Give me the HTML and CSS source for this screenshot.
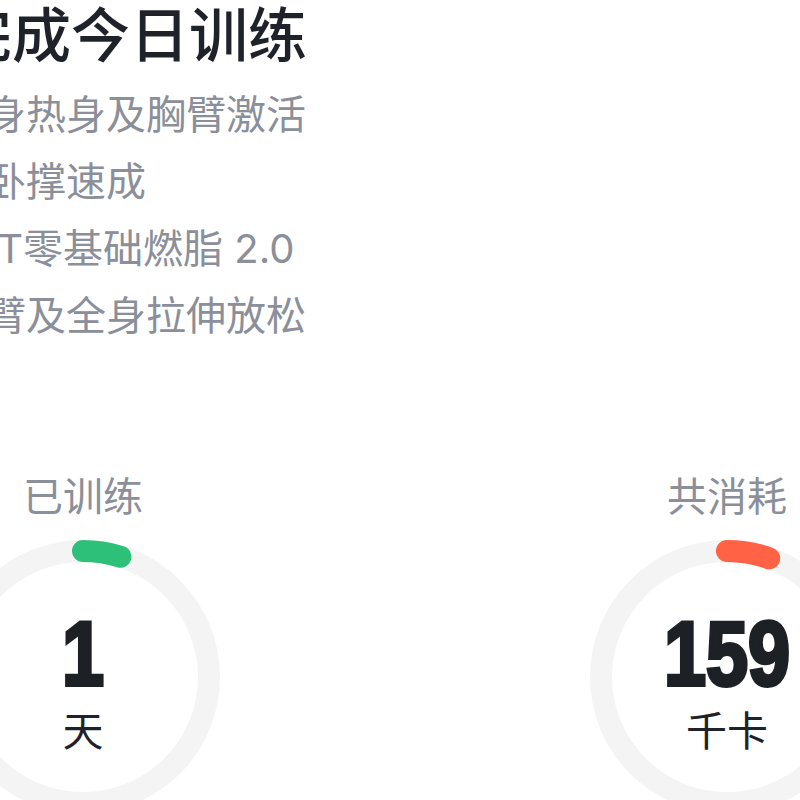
FILE: index.html
```html
<!DOCTYPE html>
<html lang="zh-CN">
<head>
    <meta charset="UTF-8">
    <meta name="viewport" content="width=device-width, initial-scale=1.0">
    <title>完成今日训练</title>
    <link rel="stylesheet" href="styles.css">
</head>
<body>

    <div class="summary">
        <h1 class="summary-title">完成今日训练</h1>

        <!-- 今日课程 -->
        <ul class="course-list">
            <li>全身热身及胸臂激活</li>
            <li>俯卧撑速成</li>
            <li>HIIT零基础燃脂 2.0</li>
            <li>手臂及全身拉伸放松</li>
        </ul>

        <!-- 统计 -->
        <div class="stats">
            <div class="stat">
                <div class="stat-label">已训练</div>
                <div class="ring">
                    <svg class="ring-svg" viewBox="0 0 274 274">
                        <circle class="ring-track" cx="137" cy="137" r="126"></circle>
                        <circle class="ring-bar ring-green" cx="137" cy="137" r="126" stroke-dasharray="38 800"></circle>
                    </svg>
                    <div class="stat-value">1</div>
                    <div class="stat-unit">天</div>
                </div>
            </div>
            <div class="stat">
                <div class="stat-label">共消耗</div>
                <div class="ring">
                    <svg class="ring-svg" viewBox="0 0 274 274">
                        <circle class="ring-track" cx="137" cy="137" r="126"></circle>
                        <circle class="ring-bar ring-orange" cx="137" cy="137" r="126" stroke-dasharray="43 800"></circle>
                    </svg>
                    <div class="stat-value">159</div>
                    <div class="stat-unit">千卡</div>
                </div>
            </div>
        </div>
    </div>

</body>
</html>
```

FILE: styles.css
```css
/* Reset */
* {
    margin: 0;
    padding: 0;
    box-sizing: border-box;
}

body {
    font-family: "Noto Sans", "Noto Sans CJK SC", sans-serif;
    background-color: #fff;
    overflow: hidden;
}

/* Wrapper utama (digeser ke kiri, seperti potongan layar) */
.summary {
    width: 918px;
    margin-left: -54px;
    padding-top: 3px;
}

.summary-title {
    font-size: 59px;
    line-height: 62px;
    font-weight: 500;
    color: #1f2329;
    padding-left: 7px;
}

/* Daftar kursus */
.course-list {
    list-style: none;
    margin-top: 16px;
}

.course-list li {
    font-family: Inter, "Noto Sans CJK SC", sans-serif;
    font-size: 40px;
    line-height: 67px;
    color: #8a8f99;
}

/* Statistik */
.stats {
    display: flex;
    justify-content: space-between;
    margin-top: 122px;
}

.stat {
    width: 274px;
    display: flex;
    flex-direction: column;
    align-items: center;
}

.stat-label {
    font-size: 40px;
    line-height: 50px;
    color: #8a8f99;
}

.ring {
    position: relative;
    width: 274px;
    height: 274px;
    margin-top: 19px;
    padding-top: 69px;
    display: flex;
    flex-direction: column;
    align-items: center;
}

.ring-svg {
    position: absolute;
    top: 0;
    left: 0;
    width: 274px;
    height: 274px;
    transform: rotate(-90deg);
}

.ring-track {
    fill: none;
    stroke: #f4f4f4;
    stroke-width: 22;
}

.ring-bar {
    fill: none;
    stroke-width: 22;
    stroke-linecap: round;
}

.ring-green {
    stroke: #2dc078;
}

.ring-orange {
    stroke: #ff6244;
}

.stat-value {
    position: relative;
    font-family: "Liberation Sans", Arial, sans-serif;
    font-weight: 700;
    font-size: 90px;
    line-height: 90px;
    color: #1d2025;
    -webkit-text-stroke: 4px #1d2025;
    transform: scaleX(0.84);
}

.stat-unit {
    position: relative;
    font-size: 41px;
    line-height: 44px;
    margin-top: 9px;
    color: #1f2329;
}
```
